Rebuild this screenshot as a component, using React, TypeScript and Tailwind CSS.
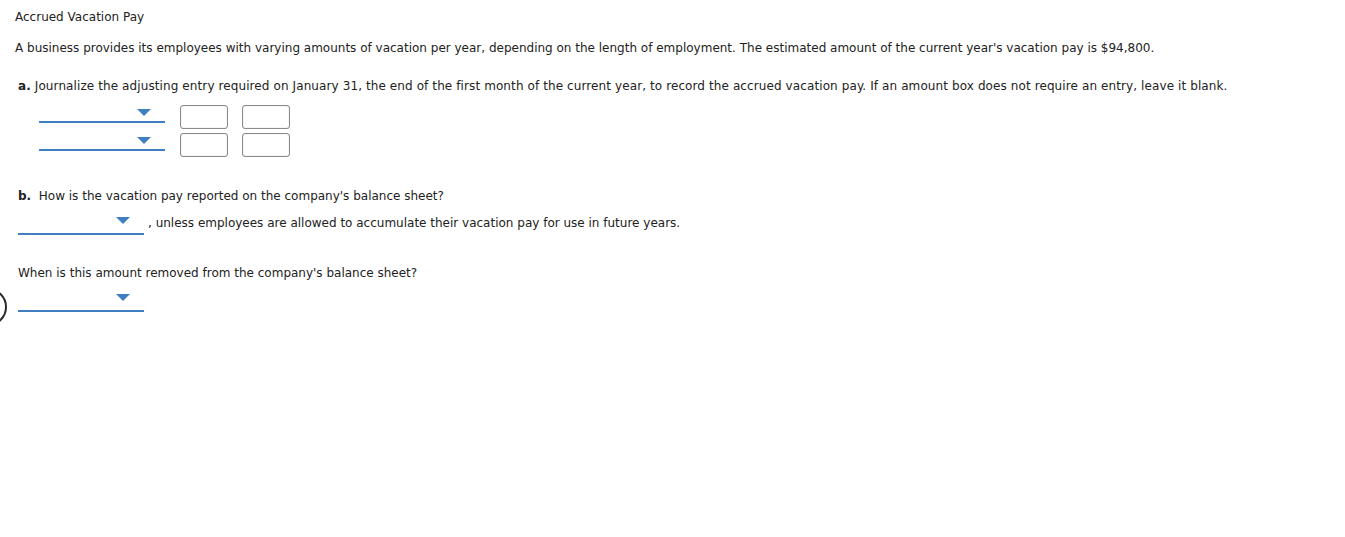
import React from 'react';

const font = { fontFamily: '"DejaVu Sans", Verdana, sans-serif' };

function Arrow() {
  return (
    <svg width="14" height="8" viewBox="0 0 14 8" className="block">
      <path d="M0 0 L14 0 L7 7 Z" fill="#3f7fbf" />
    </svg>
  );
}

function Dropdown({ width, pad }: { width: string; pad: string }) {
  return (
    <div className={`${width} ${pad} border-b-2 border-[#3f7fbf] flex items-start justify-end pr-[14px]`}>
      <Arrow />
    </div>
  );
}

function AmountBox() {
  return (
    <div className="w-[48px] h-[24px] border border-[#8a8a8a] rounded-[3px] bg-white shadow-[inset_0_0_1px_rgba(0,0,0,0.35)]" />
  );
}

export default function App() {
  return (
    <div className="relative w-[1345px] h-[537px] bg-white text-[#222] overflow-hidden" style={font}>
      <div className="absolute left-[-31px] top-[288px] w-[38px] h-[38px] rounded-full border-[2.5px] border-[#2a2a2a]" />

      <div className="pl-[15px] pt-[9px] text-[12px] leading-[16px]">Accrued Vacation Pay</div>
      <div className="pl-[15px] pt-[15px] text-[12px] leading-[16px]">
        A business provides its employees with varying amounts of vacation per year, depending on the length of employment. The estimated amount of the current year's vacation pay is $94,800.
      </div>

      <div className="pl-[18px] pt-[22px] text-[12px] leading-[16px] tracking-[0.1px]">
        <span className="font-bold">a.</span> Journalize the adjusting entry required on January 31, the end of the first month of the current year, to record the accrued vacation pay. If an amount box does not require an entry, leave it blank.
      </div>

      <div className="pl-[39px] pt-[11px] flex flex-col gap-[4px]">
        {[0, 1].map((i) => (
          <div key={i} className="flex items-start">
            <Dropdown width="w-[126px]" pad="pt-[4px] h-[18px]" />
            <div className="ml-[15px] flex gap-[14px]">
              <AmountBox />
              <AmountBox />
            </div>
          </div>
        ))}
      </div>

      <div className="pl-[18px] pt-[31px] text-[12px] leading-[16px]">
        <span className="font-bold">b.</span>&nbsp; How is the vacation pay reported on the company's balance sheet?
      </div>
      <div className="pl-[18px] pt-[8px] flex items-start text-[12px] leading-[16px]">
        <Dropdown width="w-[126px]" pad="pt-[5px] h-[23px]" />
        <span className="ml-[4px] pt-[3px]">, unless employees are allowed to accumulate their vacation pay for use in future years.</span>
      </div>

      <div className="pl-[18px] pt-[30px] text-[12px] leading-[16px]">
        When is this amount removed from the company's balance sheet?
      </div>
      <div className="pl-[18px] pt-[8px]">
        <Dropdown width="w-[126px]" pad="pt-[5px] h-[23px]" />
      </div>
    </div>
  );
}
